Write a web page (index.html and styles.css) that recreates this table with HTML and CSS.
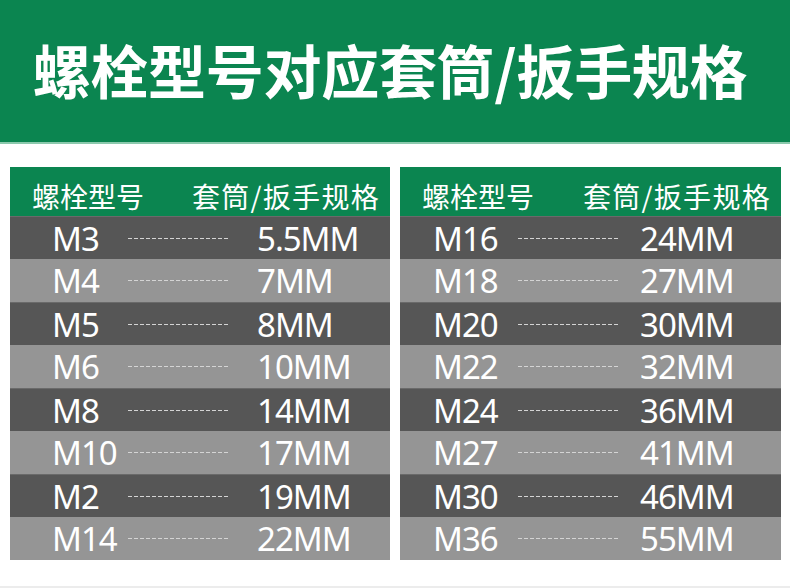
FILE: index.html
```html
<!DOCTYPE html>
<html lang="zh-CN">
<head>
<meta charset="utf-8">
<link rel="stylesheet" href="styles.css">
</head>
<body>
<div class="page">
  <header class="banner">
    <h1 class="title">螺栓型号对应套筒/扳手规格</h1>
  </header>
  <div class="tables">
    <section class="table table-left">
      <div class="head"><span>螺栓型号</span><span>套筒/扳手规格</span></div>
      <div class="row dark"><span class="bolt">M3</span><span class="dash"></span><span class="size">5.5MM</span></div>
      <div class="row light"><span class="bolt">M4</span><span class="dash"></span><span class="size">7MM</span></div>
      <div class="row dark"><span class="bolt">M5</span><span class="dash"></span><span class="size">8MM</span></div>
      <div class="row light"><span class="bolt">M6</span><span class="dash"></span><span class="size">10MM</span></div>
      <div class="row dark"><span class="bolt">M8</span><span class="dash"></span><span class="size">14MM</span></div>
      <div class="row light"><span class="bolt">M10</span><span class="dash"></span><span class="size">17MM</span></div>
      <div class="row dark"><span class="bolt">M2</span><span class="dash"></span><span class="size">19MM</span></div>
      <div class="row light"><span class="bolt">M14</span><span class="dash"></span><span class="size">22MM</span></div>
    </section>
    <section class="table table-right">
      <div class="head"><span>螺栓型号</span><span>套筒/扳手规格</span></div>
      <div class="row dark"><span class="bolt">M16</span><span class="dash"></span><span class="size">24MM</span></div>
      <div class="row light"><span class="bolt">M18</span><span class="dash"></span><span class="size">27MM</span></div>
      <div class="row dark"><span class="bolt">M20</span><span class="dash"></span><span class="size">30MM</span></div>
      <div class="row light"><span class="bolt">M22</span><span class="dash"></span><span class="size">32MM</span></div>
      <div class="row dark"><span class="bolt">M24</span><span class="dash"></span><span class="size">36MM</span></div>
      <div class="row light"><span class="bolt">M27</span><span class="dash"></span><span class="size">41MM</span></div>
      <div class="row dark"><span class="bolt">M30</span><span class="dash"></span><span class="size">46MM</span></div>
      <div class="row light"><span class="bolt">M36</span><span class="dash"></span><span class="size">55MM</span></div>
    </section>
  </div>
  <div class="bottom-line"></div>
</div>
</body>
</html>
```
FILE: styles.css
```css
html, body {
  margin: 0;
  padding: 0;
  background: #ffffff;
}
.page {
  width: 790px;
  height: 588px;
  overflow: hidden;
  font-family: "Noto Sans", "Noto Sans CJK SC", sans-serif;
}
.banner {
  height: 144px;
  background: #0b8550;
  border-bottom: 2px solid #8cc9ad;
  display: flex;
  align-items: center;
  justify-content: center;
  box-sizing: border-box;
}
.title {
  margin: 0;
  color: #ffffff;
  font-family: "Noto Sans CJK SC", sans-serif;
  font-weight: 700;
  font-size: 58px;
  line-height: 1;
  padding: 0 10px 4px 0;
  letter-spacing: -0.3px;
}
.tables {
  display: flex;
  gap: 10px;
  padding: 23px 0 0 10px;
}
.table {
  width: 380px;
  display: flex;
  flex-direction: column;
}
.table-right {
  width: 381px;
}
.head {
  height: 49px;
  box-sizing: border-box;
  background: #0b8550;
  color: #ffffff;
  display: flex;
  align-items: center;
  justify-content: space-between;
  padding: 8px 10px 0 22px;
  font-family: "Noto Sans CJK SC", sans-serif;
  font-size: 28px;
  line-height: 1;
}
.head span + span {
  letter-spacing: 1.3px;
}
.row {
  height: 43px;
  box-sizing: border-box;
  display: grid;
  align-items: center;
  color: #ffffff;
  font-family: "Noto Sans", sans-serif;
  font-size: 33px;
  line-height: 1;
  letter-spacing: -1px;
}
.table-left .row {
  grid-template-columns: 42px 76px 102px 27px 1fr;
  grid-template-areas: ". bolt dash . size";
}
.table-right .row {
  grid-template-columns: 33px 85px 102px 20px 1fr;
  grid-template-areas: ". bolt dash . size";
}
.bolt { grid-area: bolt; }
.size { grid-area: size; }
.dash {
  grid-area: dash;
  height: 1px;
  background: repeating-linear-gradient(90deg, #d4d4d4 0 4px, transparent 4px 6px);
}
.dark {
  background: #565656;
  border-top: 1px solid #6a6a6a;
}
.light {
  background: #959595;
}
.bottom-line {
  height: 2px;
  margin-top: 26px;
  background: #ececec;
}
```
